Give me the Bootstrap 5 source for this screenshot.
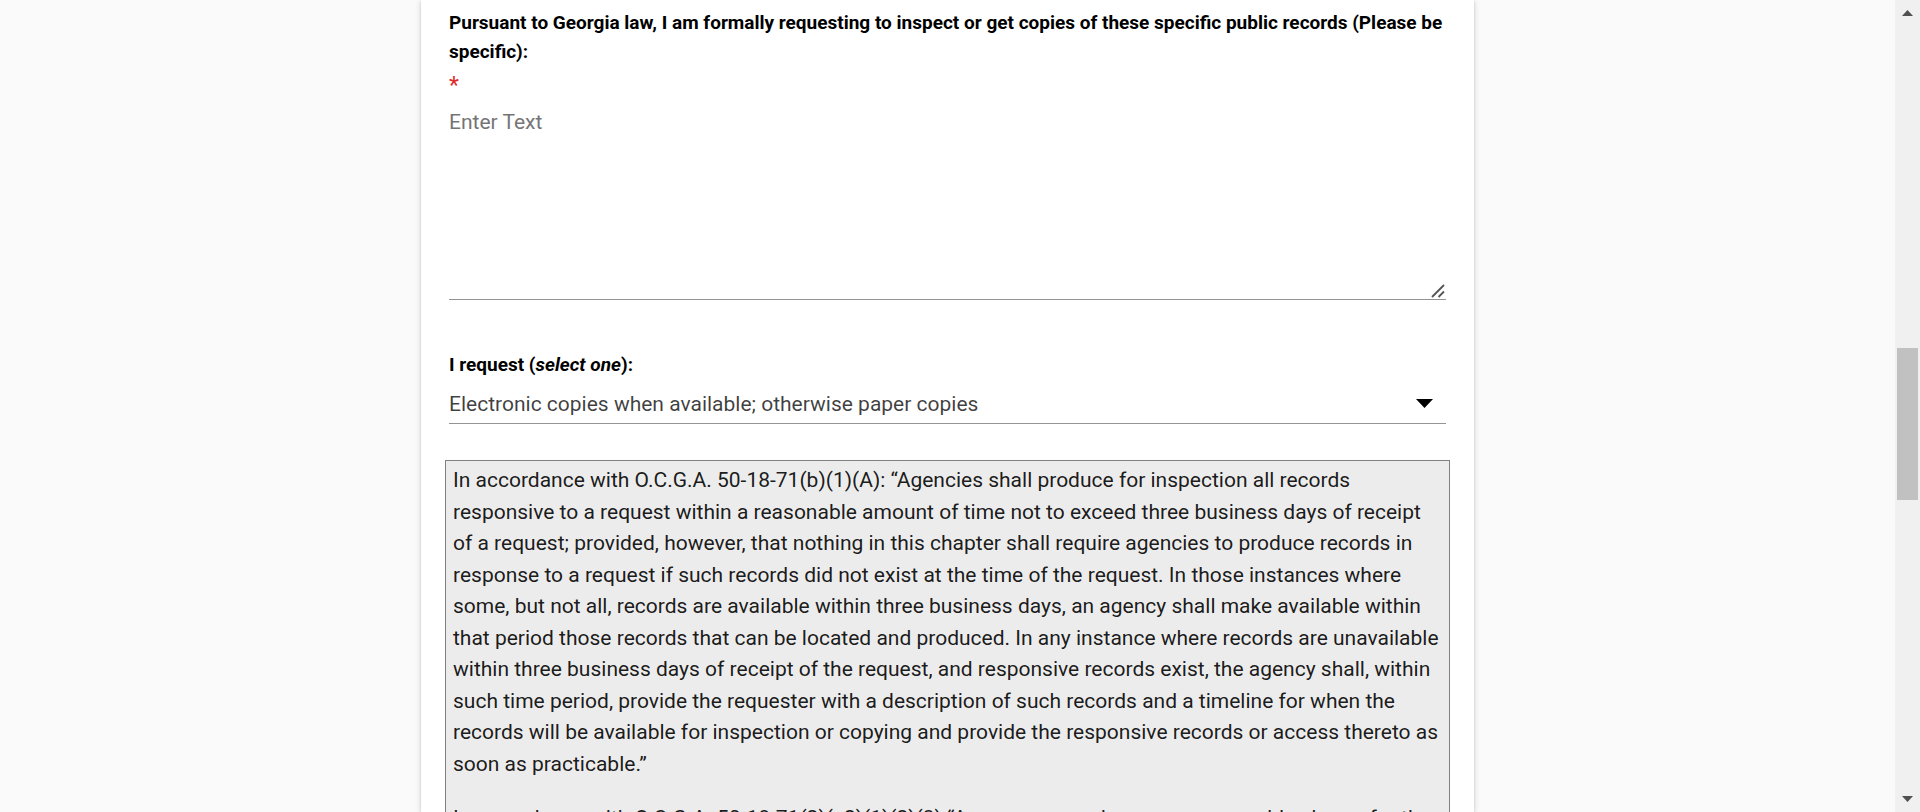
<!DOCTYPE html>
<html lang="en">
<head>
<meta charset="utf-8">
<meta name="viewport" content="width=device-width, initial-scale=1">
<title>Open Records Request</title>
<link href="https://cdn.jsdelivr.net/npm/bootstrap@5.3.0/dist/css/bootstrap.min.css" rel="stylesheet">
<style>
  body { font-family: Roboto, "Liberation Sans", sans-serif; font-size: 21px; line-height: 1.5; color: rgba(0,0,0,.87); background: #fafafa; }
  .form-sheet { width: 56%; max-width: 1053px; padding: 8px 28px 0; background: #fff; box-shadow: 0 1px 6px rgba(0,0,0,.16), 0 1px 2px rgba(0,0,0,.12); }
  .field-label { font-size: 19px; line-height: 29px; font-weight: 700; color: #000; }
  .required-mark { color: #dd2c2c; font-size: 23px; line-height: 40px; height: 40px; }
  .line-field { font-size: 21px; line-height: 32px; color: rgba(0,0,0,.75); border: 0; border-bottom: 1px solid #949494; border-radius: 0; padding: 0; background-color: transparent; }
  .line-field::placeholder { color: #757575; opacity: 1; }
  textarea.line-field { height: 194px; resize: none; }
  select.line-field { height: 39px; appearance: none; cursor: pointer; }
  .select-label { margin: 50px 0 6px; }
  .grip { right: 1px; bottom: 2px; }
  .caret { right: 13px; top: 14px; }
  .notice { margin: 36px -4px 0; padding: 4px 7px; background: #ececec; border: 1px solid #808080; color: rgba(0,0,0,.9); }
  .notice p { margin-bottom: 23px; }
  .scroll-rail { width: 25px; background: #f0f0f0; padding: 10px 2px; }
  .scroll-thumb { height: 152px; background: #c1c1c1; }
</style>
</head>
<body>
<div class="d-flex vh-100 overflow-hidden">
  <main class="flex-grow-1 d-flex justify-content-center overflow-hidden">
    <form class="form-sheet flex-shrink-0">
      <label class="field-label d-block" for="records">Pursuant to Georgia law, I am formally requesting to inspect or get copies of these specific public records (Please be specific):</label>
      <div class="required-mark">*</div>
      <div class="position-relative">
        <textarea id="records" class="line-field form-control shadow-none" placeholder="Enter Text" required></textarea>
        <svg class="grip position-absolute" width="14" height="14" viewBox="0 0 14 14" fill="none" stroke="#555" stroke-width="1.8" aria-hidden="true"><path d="M1 13 13 1M7.500 13 13 7.500"/></svg>
      </div>
      <label class="field-label select-label d-block" for="format">I request (<em>select one</em>):</label>
      <div class="position-relative">
        <select id="format" class="line-field w-100 d-block">
          <option>Electronic copies when available; otherwise paper copies</option>
          <option>Paper copies</option>
          <option>To inspect the records</option>
        </select>
        <svg class="caret position-absolute pe-none" width="17" height="9" viewBox="0 0 17 9" aria-hidden="true"><path d="M0 0h17L8.500 9z"/></svg>
      </div>
      <div class="notice">
        <p>In accordance with O.C.G.A. 50-18-71(b)(1)(A): “Agencies shall produce for inspection all records responsive to a request within a reasonable amount of time not to exceed three business days of receipt of a request; provided, however, that nothing in this chapter shall require agencies to produce records in response to a request if such records did not exist at the time of the request. In those instances where some, but not all, records are available within three business days, an agency shall make available within that period those records that can be located and produced. In any instance where records are unavailable within three business days of receipt of the request, and responsive records exist, the agency shall, within such time period, provide the requester with a description of such records and a timeline for when the records will be available for inspection or copying and provide the responsive records or access thereto as soon as practicable.”</p>
        <p>In accordance with O.C.G.A. 50-18-71(2)(c2)(1)(2)(3) “An agency may impose a reasonable charge for the</p>
      </div>
    </form>
  </main>
  <div class="scroll-rail flex-shrink-0 d-flex flex-column align-items-center" aria-hidden="true">
    <svg width="11" height="6" viewBox="0 0 11 6"><path d="M0 6h11L5.500 0z" fill="#505050"/></svg>
    <div style="flex-grow:332"></div>
    <div class="scroll-thumb w-100"></div>
    <div style="flex-grow:296"></div>
    <svg width="11" height="6" viewBox="0 0 11 6"><path d="M0 0h11L5.500 6z" fill="#505050"/></svg>
  </div>
</div>
<script src="https://cdn.jsdelivr.net/npm/bootstrap@5.3.0/dist/js/bootstrap.bundle.min.js"></script>
</body>
</html>
